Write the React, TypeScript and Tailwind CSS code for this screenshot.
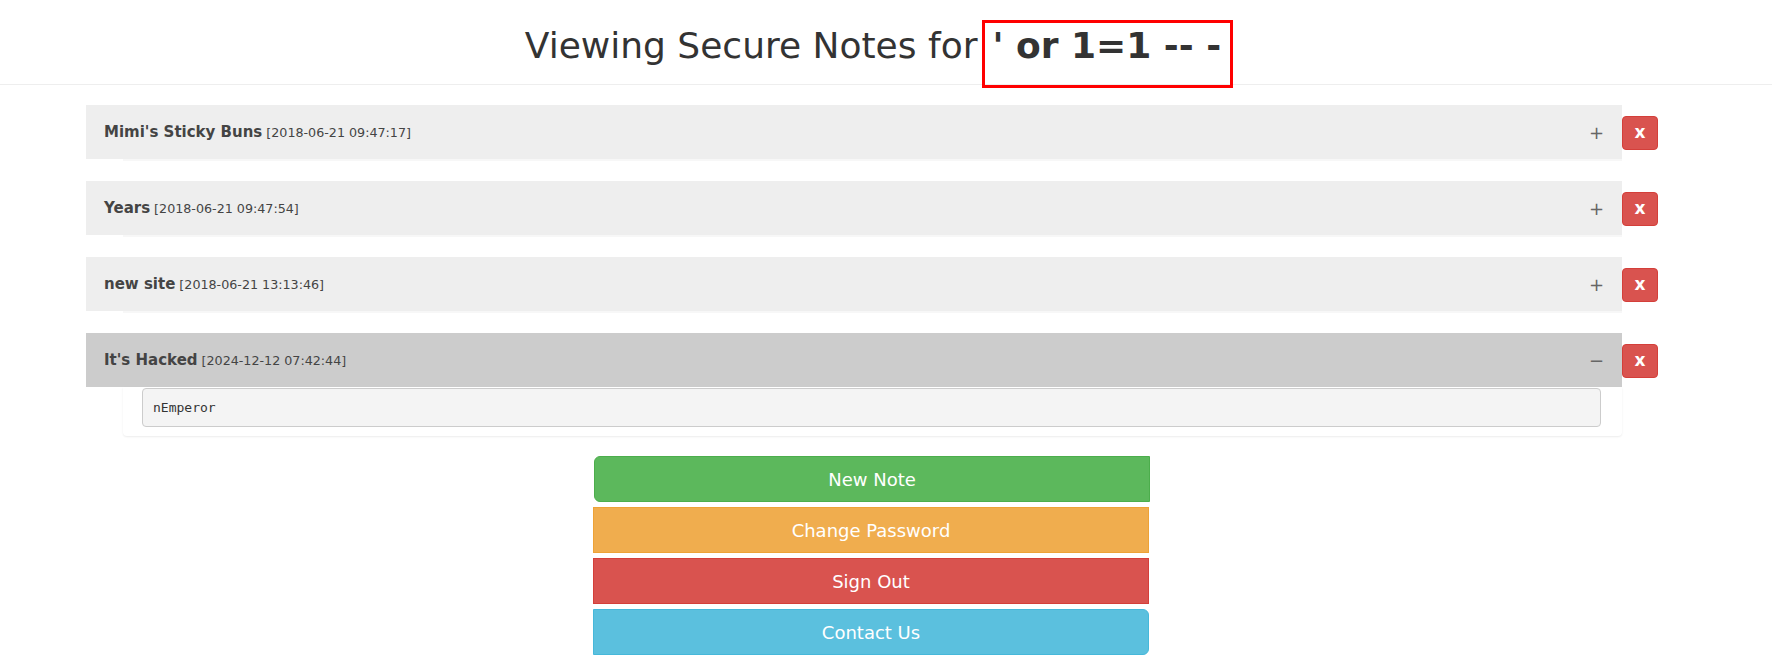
import * as React from "react"

interface Note { title: string; ts: string; body?: string; open?: boolean }

const notes: Note[] = [
  { title: "Mimi's Sticky Buns", ts: "2018-06-21 09:47:17" },
  { title: "Years", ts: "2018-06-21 09:47:54" },
  { title: "new site", ts: "2018-06-21 13:13:46" },
  { title: "It's Hacked", ts: "2024-12-12 07:42:44", body: "nEmperor", open: true },
]

function NoteRow({ note }: { note: Note }) {
  return (
    <div className="flex items-start mb-[20px]">
      <div className="w-[1536px]">
        {/* Heading */}
        <div className={`h-[54px] flex items-center justify-between pl-[18px] pr-[19px] ${note.open ? "bg-[#cccccc]" : "bg-[#eeeeee]"}`}>
          <div className="flex items-baseline gap-[4px] text-[#444]">
            <span className="text-[15px] font-bold">{note.title}</span>
            <span className="text-[12.7px]">[{note.ts}]</span>
          </div>
          <span className="text-[18px] text-[#666] w-[14px] text-center">{note.open ? "−" : "+"}</span>
        </div>
        {/* Body */}
        {note.open ? (
          <div className="ml-[37px] pt-[1px] pb-[9px] pl-[19px] pr-[21px] rounded-b-[4px] shadow-[0_1px_2px_rgba(0,0,0,0.08)]">
            <pre className="h-[39px] flex items-center px-[10px] bg-[#f4f4f4] border border-[#cccccc] rounded-[4px] text-[13px] text-[#333] font-['DejaVu_Sans_Mono',monospace]">
              {note.body}
            </pre>
          </div>
        ) : (
          <div className="ml-[37px] h-[2px] bg-[#f7f7f7]" />
        )}
      </div>
      <button className="mt-[11px] w-[36px] h-[34px] bg-[#d9534f] border border-[#d43f3a] rounded-[4px] text-white font-bold text-[17px] leading-none flex items-center justify-center pb-[2px]">
        x
      </button>
    </div>
  )
}

export default function App() {
  return (
    <div className="min-h-screen bg-white text-[#333] font-['DejaVu_Sans',sans-serif]">

      {/* Header */}
      <header className="h-[85px] border-b border-[#eeeeee]">
        <div className="w-[1742px] pt-[20px] pl-[16px] flex justify-center">
          <h1 className="flex items-baseline text-[36px] leading-[42px] font-normal text-[#333]">
            <span>Viewing Secure Notes for</span>
            <span className="ml-[5px] inline-block border-[3px] border-[#ff0000] pt-[2px] pb-[18px] pl-[7px] pr-[9px] font-bold leading-[42px]">
              ' or 1=1 -- -
            </span>
          </h1>
        </div>
      </header>

      {/* Notes */}
      <div className="w-[1742px] pt-[20px] pl-[86px]">
        {notes.map((n) => <NoteRow key={n.title} note={n} />)}
      </div>

      {/* Actions */}
      <div className="w-[1742px] flex flex-col items-center gap-[5px]">
        <button className="w-[556px] h-[46px] ml-[2px] bg-[#5cb85c] border border-[#4cae4c] rounded-l-[6px] text-white text-[18px]">New Note</button>
        <button className="w-[556px] h-[46px] bg-[#f0ad4e] border border-[#eea236] text-white text-[18px]">Change Password</button>
        <button className="w-[556px] h-[46px] bg-[#d9534f] border border-[#d43f3a] text-white text-[18px]">Sign Out</button>
        <button className="w-[556px] h-[46px] bg-[#5bc0de] border border-[#46b8da] rounded-r-[6px] text-white text-[18px]">Contact Us</button>
      </div>
    </div>
  )
}
